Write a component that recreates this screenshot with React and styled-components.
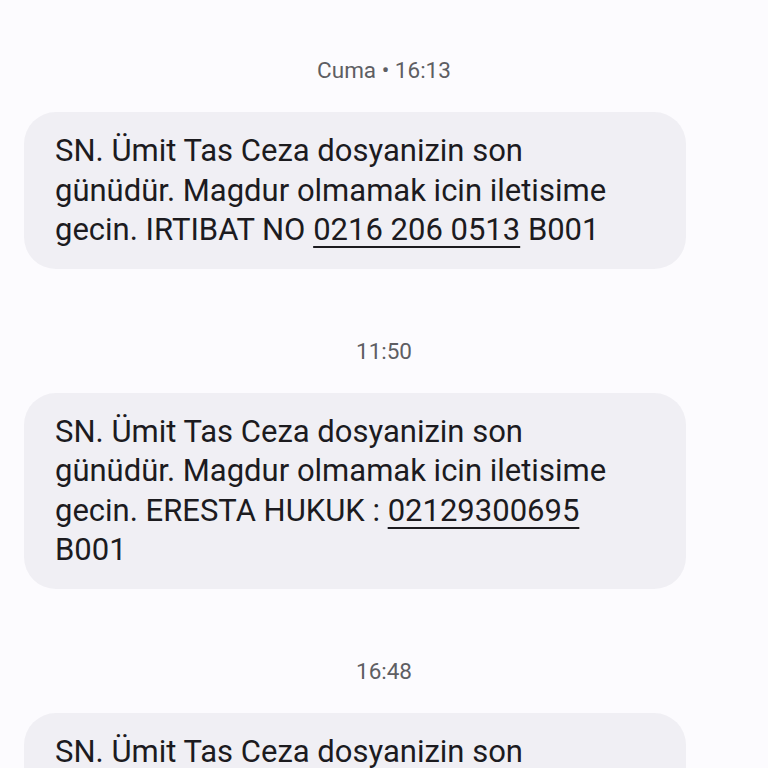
import React from "react";
import styled, { createGlobalStyle } from "styled-components";

const GlobalStyle = createGlobalStyle`
  html, body {
    margin: 0;
    padding: 0;
    background: #fcfbfe;
    overflow: hidden;
  }
  body {
    font-family: Roboto, "Noto Sans", "Liberation Sans", sans-serif;
  }
`;

const messages = [
  {
    time: "Cuma • 16:13",
    parts: [
      "SN. Ümit Tas Ceza dosyanizin son günüdür. Magdur olmamak icin iletisime gecin. IRTIBAT NO ",
      { link: "0216 206 0513" },
      " B001",
    ],
  },
  {
    time: "11:50",
    parts: [
      "SN. Ümit Tas Ceza dosyanizin son günüdür. Magdur olmamak icin iletisime gecin. ERESTA HUKUK : ",
      { link: "02129300695" },
      " B001",
    ],
  },
  {
    time: "16:48",
    parts: [
      "SN. Ümit Tas Ceza dosyanizin son günüdür. Magdur olmamak icin iletisime gecin. IRTIBAT NO ",
      { link: "0216 206 0513" },
      " B001",
    ],
  },
];

function App() {
  return (
    <>
      <GlobalStyle />
      <Thread>
        {messages.map((msg, i) => (
          <Group key={i}>
            <Timestamp>{msg.time}</Timestamp>
            <Bubble>
              {msg.parts.map((p, j) =>
                typeof p === "string" ? (
                  <React.Fragment key={j}>{p}</React.Fragment>
                ) : (
                  <Phone key={j}>{p.link}</Phone>
                )
              )}
            </Bubble>
          </Group>
        ))}
      </Thread>
    </>
  );
}

const Thread = styled.div`
  display: flex;
  flex-direction: column;
  gap: 40px;
  padding-top: 28px;
  height: 768px;
  box-sizing: border-box;
`;

const Group = styled.div`
  display: flex;
  flex-direction: column;
`;

const Timestamp = styled.div`
  height: 84px;
  display: flex;
  align-items: center;
  justify-content: center;
  font-size: 22.5px;
  color: #5e5e63;
`;

const Bubble = styled.div`
  margin-left: 24px;
  width: 662px;
  box-sizing: border-box;
  padding: 19px 50px 19px 31px;
  background: #f0eff4;
  border-radius: 32px;
  font-size: 31px;
  letter-spacing: 0;
  line-height: 39.5px;
  color: #1c1b1f;
`;

const Phone = styled.span`
  text-decoration: underline;
  text-decoration-thickness: 2px;
  text-underline-offset: 6px;
`;

export default App;
